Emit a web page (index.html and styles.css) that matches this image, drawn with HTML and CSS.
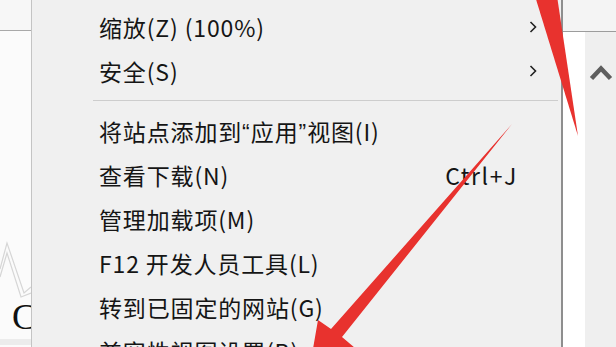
FILE: index.html
```html
<!DOCTYPE html>
<html lang="zh-CN">
<head>
<meta charset="utf-8">
<title>菜单</title>
<link rel="stylesheet" href="styles.css">
</head>
<body>
<div class="page">
  <div class="left">
    <div class="left-top"></div>
    <svg class="left-art" width="31" height="268" viewBox="0 0 31 268">
      <g fill="none" stroke="#d6d6d6" stroke-width="1.2">
        <polyline points="0,238 7,212 24,262 31,256"/>
        <polyline points="0,246 7,222 21,266 31,262"/>
      </g>
    </svg>
    <div class="left-c">C</div>
    <div class="left-faint"></div>
  </div>

  <div class="menu">
    <div class="item"><span class="label">缩放(Z) (100%)</span><span class="key"></span><svg class="sub" width="8" height="12" viewBox="0 0 8 12"><polyline points="1.5,1 6.5,6 1.5,11"/></svg></div>
    <div class="item"><span class="label">安全(S)</span><span class="key"></span><svg class="sub" width="8" height="12" viewBox="0 0 8 12"><polyline points="1.5,1 6.5,6 1.5,11"/></svg></div>
    <div class="sep"></div>
    <div class="item"><span class="label">将站点添加到<span class="q">“</span>应用<span class="q">”</span>视图(I)</span><span class="key"></span><span class="sub-slot"></span></div>
    <div class="item"><span class="label">查看下载(N)</span><span class="key">Ctrl+J</span><span class="sub-slot"></span></div>
    <div class="item"><span class="label">管理加载项(M)</span><span class="key"></span><span class="sub-slot"></span></div>
    <div class="item"><span class="label">F12 开发人员工具(L)</span><span class="key"></span><span class="sub-slot"></span></div>
    <div class="item"><span class="label">转到已固定的网站(G)</span><span class="key"></span><span class="sub-slot"></span></div>
    <div class="item"><span class="label">兼容性视图设置(B)</span><span class="key"></span><span class="sub-slot"></span></div>
  </div>

  <div class="right">
    <div class="right-top"></div>
    <div class="right-body">
      <div class="strip"></div>
      <div class="scroll">
        <svg class="up" width="24" height="16" viewBox="0 0 24 16"><polyline points="2.5,13.5 12,3.5 21.5,13.5"/></svg>
      </div>
    </div>
  </div>

  <svg class="arrows" width="616" height="347" viewBox="0 0 616 347">
    <defs>
      <filter id="soft" x="-10%" y="-10%" width="120%" height="120%"><feGaussianBlur stdDeviation="0.7"/></filter>
    </defs>
    <g fill="#e8302d" filter="url(#soft)">
      <polygon points="535,-4 557,-4 578,136"/>
      <polygon points="512,124 342,337 355,348 310,366 318,320 331,329"/>
    </g>
  </svg>
</div>
</body>
</html>
```

FILE: styles.css
```css
html, body {
  margin: 0;
  padding: 0;
}

body {
  width: 616px;
  height: 347px;
  overflow: hidden;
  background: #fbfbfb;
}

.page {
  position: relative;
  display: flex;
  width: 616px;
  height: 347px;
  overflow: hidden;
}

.left {
  width: 31px;
  flex: 0 0 31px;
  background: #fbfbfb;
  overflow: hidden;
}

.left-top {
  height: 30px;
  border-bottom: 1px solid #a9a9a9;
  background: #f7f7f7;
}

.left-art {
  display: block;
}

.left-c {
  font-family: "Liberation Serif", serif;
  font-size: 36px;
  line-height: 36px;
  color: #111;
  padding-left: 12px;
  white-space: nowrap;
}

.left-faint {
  margin-top: 4px;
  height: 6px;
  background: #ececec;
}

.menu {
  width: 529px;
  flex: 0 0 529px;
  background: #f0f0f0;
  border-left: 1px solid #c4c4c4;
  border-right: 2px solid #8e8e8e;
  padding-top: 5px;
  font-family: "Noto Sans CJK SC", "Noto Sans", sans-serif;
  color: #151515;
}

.item {
  display: grid;
  grid-template-columns: 1fr auto 8px;
  column-gap: 11px;
  align-items: center;
  height: 44px;
  padding-left: 67px;
  padding-right: 24px;
  font-size: 23px;
  line-height: 44px;
  letter-spacing: 0.85px;
  white-space: nowrap;
}

.q {
  font-family: "Liberation Sans", sans-serif;
  letter-spacing: 1px;
}

.key {
  letter-spacing: 1.6px;
}

.sub {
  display: block;
}

.sub polyline {
  fill: none;
  stroke: #222;
  stroke-width: 1.6;
}

.sep {
  height: 1px;
  background: #cdcdcd;
  margin: 7px 3px 8px 61px;
}

.right {
  flex: 1;
  display: flex;
  flex-direction: column;
}

.right-top {
  height: 31px;
  border-bottom: 1px solid #9c9c9c;
  background: #f4f4f4;
}

.right-body {
  flex: 1;
  display: flex;
}

.strip {
  width: 22px;
  background: #ffffff;
}

.scroll {
  flex: 1;
  background: #efefef;
  display: flex;
  justify-content: center;
  padding-top: 33px;
}

.up {
  display: block;
}

.up polyline {
  fill: none;
  stroke: #5e5e5e;
  stroke-width: 4.5;
  stroke-linejoin: miter;
}

.arrows {
  position: absolute;
  left: 0;
  top: 0;
  pointer-events: none;
}
```
